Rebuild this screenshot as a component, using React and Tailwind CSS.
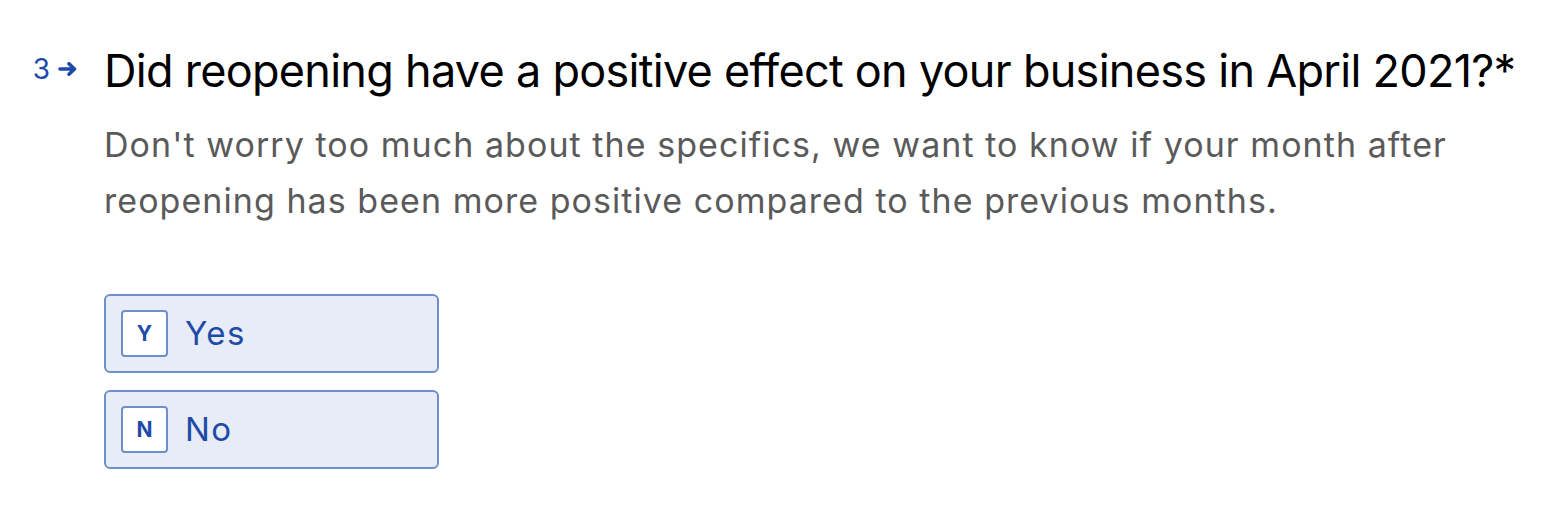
export default function App() {
    const choices = [
        { key: 'Y', label: 'Yes' },
        { key: 'N', label: 'No' },
    ];

    return (
        <div className="w-[1566px] h-[508px] bg-white overflow-hidden" style={{ fontFamily: 'Inter, "Noto Sans", sans-serif' }}>
            <div className="flex pt-[45px]">
                <div className="w-[104px] shrink-0 flex items-center justify-end pr-[26px] mt-[10px] h-[28px] text-[#1e4ba8]">
                    <span className="text-[28px] leading-[28px]">3</span>
                    <svg className="ml-[8px] mt-[-1px]" width="20" height="14" viewBox="0 0 20 14" fill="none">
                        <path d="M2 7h14.5M11 1.8l5.5 5.2-5.5 5.2" stroke="#1e4ba8" strokeWidth="3.6" strokeLinecap="round" strokeLinejoin="round" />
                    </svg>
                </div>
                <div className="flex flex-col">
                    <h1 className="text-[45px] leading-[52px] text-black tracking-[-0.72px]">
                        Did reopening have a positive effect on your business in April 2021?*
                    </h1>
                    <p className="mt-[20px] text-[34px] leading-[56px] text-[#5a5a5a] tracking-[1.05px] w-[1420px]">
                        Don't worry too much about the specifics, we want to know if your month after reopening has been more positive compared to the previous months.
                    </p>
                    <div className="mt-[65px] flex flex-col gap-[17px]">
                        {choices.map((c) => (
                            <div key={c.key} className="w-[335px] h-[79px] rounded-[6px] border-2 border-[#6f8fcc] bg-[#e7ecf6] flex items-center pl-[15px]">
                                <span className="w-[47px] h-[47px] rounded-[4px] border-2 border-[#6f8fcc] bg-white flex items-center justify-center text-[21px] font-bold text-[#1e4ba8]">
                                    {c.key}
                                </span>
                                <span className="ml-[17px] text-[33px] tracking-[1.5px] text-[#1e4ba8]">{c.label}</span>
                            </div>
                        ))}
                    </div>
                </div>
            </div>
        </div>
    )
}
